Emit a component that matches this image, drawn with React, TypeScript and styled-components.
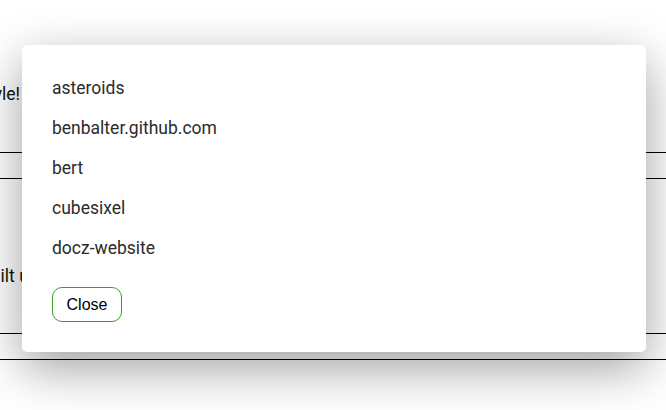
import React from "react";
import styled, { createGlobalStyle } from "styled-components";

const GlobalStyle = createGlobalStyle`
  html, body {
    margin: 0;
    padding: 0;
    background: #ffffff;
    overflow: hidden;
  }
  body {
    font-family: Roboto, "Liberation Sans", Arial, sans-serif;
  }
`;

const Page = styled.div`
  position: relative;
  width: 666px;
  height: 410px;
  overflow: hidden;
`;

const Content = styled.div`
  display: flex;
  flex-direction: column;
  padding-top: 84px;
`;

// background copy, partly hidden behind the modal
const Line = styled.p<{ $end?: number; $start?: number; $top?: number }>`
  width: 420px;
  margin: ${(p) => p.$top ?? 0}px 0 0
    ${(p) => (p.$end !== undefined ? p.$end - 420 : p.$start ?? 0)}px;
  text-align: ${(p) => (p.$end !== undefined ? "right" : "left")};
  font-size: 17.5px;
  line-height: 20px;
  color: #111111;
  white-space: nowrap;
`;

const Rule = styled.hr<{ $top: number }>`
  margin: ${(p) => p.$top}px 0 0;
  border: none;
  border-top: 1px solid #000000;
  height: 0;
`;

const Overlay = styled.div`
  position: absolute;
  inset: 0;
  padding: 45px 20px 0 22px;
`;

const Modal = styled.div`
  width: 624px;
  height: 307px;
  box-sizing: border-box;
  background: #ffffff;
  border-radius: 5px;
  box-shadow: 0 16px 50px rgba(0, 0, 0, 0.38);
  padding: 23px 30px 29px;
  display: flex;
  flex-direction: column;
  align-items: flex-start;
`;

const RepoList = styled.ul`
  list-style: none;
  margin: 0 0 19px;
  padding: 0;
`;

const RepoItem = styled.li`
  font-size: 17.5px;
  line-height: 24px;
  padding: 8px 0;
  color: #2b2b2b;
`;

const CloseButton = styled.button`
  font-family: "Liberation Sans", Arial, sans-serif;
  font-size: 16px;
  line-height: 19px;
  color: #000000;
  background: #ffffff;
  border: 1px solid #3f9a2c;
  border-radius: 10px;
  padding: 7px 13px;
  width: 70px;
  cursor: pointer;
`;

const repos = [
  "asteroids",
  "benbalter.github.com",
  "bert",
  "cubesixel",
  "docz-website",
];

const App: React.FunctionComponent = () => {
  return (
    <Page>
      <GlobalStyle />
      <Content>
        <Line $end={20}>Hello, and welcome to my style!</Line>
        <Rule $top={48} />
        <Rule $top={25} />
        <Line $start={-20} $top={87}>
          Built using styled-components
        </Line>
        <Rule $top={47} />
        <Rule $top={25} />
      </Content>
      <Overlay>
        <Modal>
          <RepoList>
            {repos.map((r) => (
              <RepoItem key={r}>{r}</RepoItem>
            ))}
          </RepoList>
          <CloseButton>Close</CloseButton>
        </Modal>
      </Overlay>
    </Page>
  );
};

export default App;
